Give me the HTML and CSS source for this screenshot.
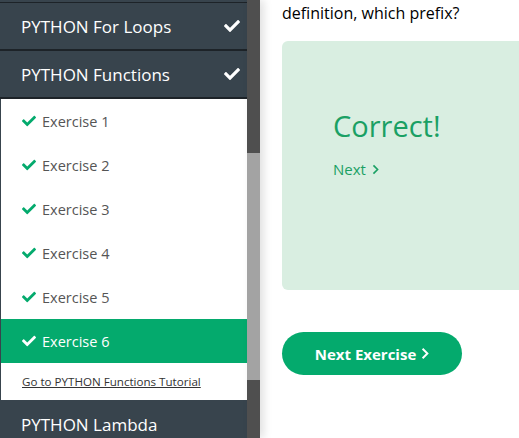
FILE: index.html
```html
<!DOCTYPE html>
<html>
<head>
<meta charset="utf-8">
<link rel="stylesheet" href="styles.css">
</head>
<body>
<div class="page">
  <nav class="sidebar">
    <div class="topcut"></div>
    <div class="chapter">
      <span>PYTHON For Loops</span>
      <svg class="chk" viewBox="0 0 512 512"><path d="M173.898 439.404l-166.4-166.4c-9.997-9.997-9.997-26.206 0-36.204l36.203-36.204c9.997-9.998 26.207-9.998 36.204 0L192 312.690 432.095 72.596c9.997-9.997 26.207-9.997 36.204 0l36.203 36.204c9.997 9.997 9.997 26.206 0 36.204l-294.4 294.401c-9.998 9.997-26.207 9.997-36.204-.001z"/></svg>
    </div>
    <div class="chapter">
      <span>PYTHON Functions</span>
      <svg class="chk" viewBox="0 0 512 512"><path d="M173.898 439.404l-166.4-166.4c-9.997-9.997-9.997-26.206 0-36.204l36.203-36.204c9.997-9.998 26.207-9.998 36.204 0L192 312.690 432.095 72.596c9.997-9.997 26.207-9.997 36.204 0l36.203 36.204c9.997 9.997 9.997 26.206 0 36.204l-294.4 294.401c-9.998 9.997-26.207 9.997-36.204-.001z"/></svg>
    </div>
    <div class="exlist">
      <div class="ex"><svg class="echk" viewBox="0 0 512 512"><path d="M173.898 439.404l-166.4-166.4c-9.997-9.997-9.997-26.206 0-36.204l36.203-36.204c9.997-9.998 26.207-9.998 36.204 0L192 312.690 432.095 72.596c9.997-9.997 26.207-9.997 36.204 0l36.203 36.204c9.997 9.997 9.997 26.206 0 36.204l-294.4 294.401c-9.998 9.997-26.207 9.997-36.204-.001z"/></svg>Exercise 1</div>
      <div class="ex"><svg class="echk" viewBox="0 0 512 512"><path d="M173.898 439.404l-166.4-166.4c-9.997-9.997-9.997-26.206 0-36.204l36.203-36.204c9.997-9.998 26.207-9.998 36.204 0L192 312.690 432.095 72.596c9.997-9.997 26.207-9.997 36.204 0l36.203 36.204c9.997 9.997 9.997 26.206 0 36.204l-294.4 294.401c-9.998 9.997-26.207 9.997-36.204-.001z"/></svg>Exercise 2</div>
      <div class="ex"><svg class="echk" viewBox="0 0 512 512"><path d="M173.898 439.404l-166.4-166.4c-9.997-9.997-9.997-26.206 0-36.204l36.203-36.204c9.997-9.998 26.207-9.998 36.204 0L192 312.690 432.095 72.596c9.997-9.997 26.207-9.997 36.204 0l36.203 36.204c9.997 9.997 9.997 26.206 0 36.204l-294.4 294.401c-9.998 9.997-26.207 9.997-36.204-.001z"/></svg>Exercise 3</div>
      <div class="ex"><svg class="echk" viewBox="0 0 512 512"><path d="M173.898 439.404l-166.4-166.4c-9.997-9.997-9.997-26.206 0-36.204l36.203-36.204c9.997-9.998 26.207-9.998 36.204 0L192 312.690 432.095 72.596c9.997-9.997 26.207-9.997 36.204 0l36.203 36.204c9.997 9.997 9.997 26.206 0 36.204l-294.4 294.401c-9.998 9.997-26.207 9.997-36.204-.001z"/></svg>Exercise 4</div>
      <div class="ex"><svg class="echk" viewBox="0 0 512 512"><path d="M173.898 439.404l-166.4-166.4c-9.997-9.997-9.997-26.206 0-36.204l36.203-36.204c9.997-9.998 26.207-9.998 36.204 0L192 312.690 432.095 72.596c9.997-9.997 26.207-9.997 36.204 0l36.203 36.204c9.997 9.997 9.997 26.206 0 36.204l-294.4 294.401c-9.998 9.997-26.207 9.997-36.204-.001z"/></svg>Exercise 5</div>
      <div class="ex active"><svg class="echk" viewBox="0 0 512 512"><path d="M173.898 439.404l-166.4-166.4c-9.997-9.997-9.997-26.206 0-36.204l36.203-36.204c9.997-9.998 26.207-9.998 36.204 0L192 312.690 432.095 72.596c9.997-9.997 26.207-9.997 36.204 0l36.203 36.204c9.997 9.997 9.997 26.206 0 36.204l-294.4 294.401c-9.998 9.997-26.207 9.997-36.204-.001z"/></svg>Exercise 6</div>
      <div class="tut"><a href="#">Go to PYTHON Functions Tutorial</a></div>
    </div>
    <div class="chapter last"><span>PYTHON Lambda</span></div>
  </nav>
  <div class="scrollbar"><div class="thumb"></div></div>
  <main class="main">
    <p class="question">definition, which prefix?</p>
    <div class="result">
      <div class="correct">Correct!</div>
      <a class="next" href="#">Next <svg class="chev" viewBox="0 0 10 16"><path d="M2 2l6 6-6 6" fill="none" stroke="currentColor" stroke-width="2.4"/></svg></a>
    </div>
    <button class="nextbtn">Next Exercise <svg class="chev2" viewBox="0 0 10 16"><path d="M2 2l6 6-6 6" fill="none" stroke="currentColor" stroke-width="2.4"/></svg></button>
  </main>
</div>
</body>
</html>
```

FILE: styles.css
```css
* { box-sizing: border-box; }
html, body { margin: 0; padding: 0; }
body {
  width: 519px;
  height: 438px;
  overflow: hidden;
  background: #fff;
  font-family: "Open Sans", "Noto Sans", sans-serif;
}
.page {
  display: flex;
  height: 438px;
  overflow: hidden;
}
.sidebar {
  width: 247px;
  flex: none;
  background: #38444d;
  display: flex;
  flex-direction: column;
  overflow: hidden;
}
.sidebar > * { flex: none; }
.topcut {
  height: 3px;
  border-bottom: 1px solid #1d2328;
}
.chapter {
  height: 48px;
  border-bottom: 2px solid #1d2328;
  display: flex;
  align-items: center;
  justify-content: space-between;
  padding: 0 7px 0 21px;
  color: #fff;
  font-size: 17px;
}
.chapter.last { border-bottom: none; }
.chk { width: 16px; height: 16px; fill: #fff; }
.exlist {
  background: #fff;
  margin-left: 1px;
}
.ex {
  height: 44px;
  display: flex;
  align-items: center;
  padding-left: 21px;
  font-size: 14.5px;
  color: #555;
}
.echk { width: 14px; height: 14px; fill: #04aa6d; margin-right: 6px; }
.ex.active { background: #04aa6d; color: #fff; }
.ex.active .echk { fill: #fff; }
.tut {
  height: 37px;
  display: flex;
  align-items: center;
  padding-left: 21px;
}
.tut a { color: #333; font-size: 11.6px; text-decoration: underline; }
.scrollbar {
  width: 13px;
  flex: none;
  background: #4f4f4f;
  padding-top: 153px;
  box-shadow: 4px 0 8px rgba(0,0,0,0.12);
  position: relative;
  z-index: 1;
}
.thumb {
  height: 227px;
  background: #a3a3a3;
}
.main {
  flex: 1;
  padding: 0 0 0 22px;
  overflow: hidden;
}
.question {
  margin: 2px 0 0;
  font-size: 16px;
  color: #000;
  line-height: 22px;
  white-space: nowrap;
}
.result {
  margin-top: 17px;
  width: 260px;
  height: 249px;
  background: #d9eee1;
  border-radius: 6px 0 0 6px;
  padding: 65px 0 0 51px;
}
.correct {
  font-size: 29px;
  color: #1aa064;
  line-height: 40px;
}
.next {
  display: inline-flex;
  align-items: center;
  margin-top: 13px;
  font-size: 15px;
  color: #1aa064;
  text-decoration: none;
}
.chev { width: 7px; height: 11px; margin-left: 6px; }
.nextbtn {
  margin-top: 42px;
  width: 180px;
  height: 43px;
  border: none;
  border-radius: 22px;
  background: #04aa6d;
  color: #fff;
  font-family: "Open Sans", sans-serif;
  font-weight: 700;
  font-size: 15px;
  display: flex;
  align-items: center;
  justify-content: center;
}
.chev2 { width: 8px; height: 13px; margin-left: 5px; }
```
